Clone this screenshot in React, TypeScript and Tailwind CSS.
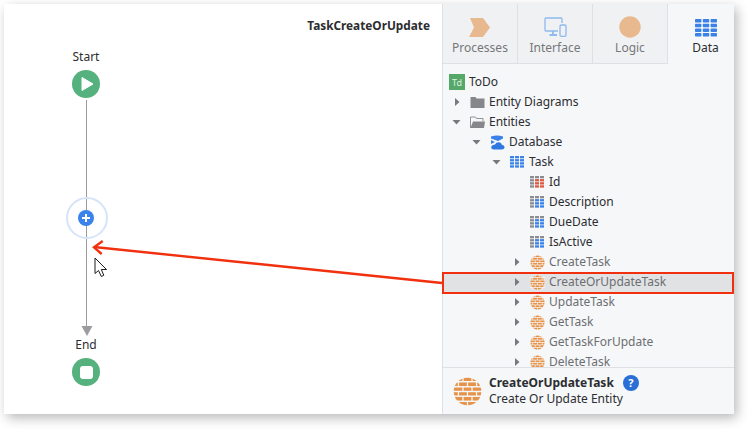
import React from "react";

const font = { fontFamily: '"Noto Sans", sans-serif' };

function Caret({ dir }: { dir: "right" | "down" }) {
  return (
    <svg width="10" height="10" viewBox="0 0 10 10" className="block">
      {dir === "right" ? <path d="M3 1 L7.5 5 L3 9 Z" fill="#77797d" /> : <path d="M0.5 3 L8.5 3 L4.5 7.5 Z" fill="#77797d" />}
    </svg>
  );
}

function Grid({ colors, size = 14 }: { colors: string[][]; size?: number }) {
  return (
    <svg width={size} height={size * 0.86} viewBox="0 0 14 12" className="block">
      {colors.map((row, r) =>
        row.map((c, i) => <rect key={`${r}-${i}`} x={i * 5} y={r * 3.1} width="4" height="2.3" fill={c} />)
      )}
    </svg>
  );
}

const B = "#3b82e8";
const G = "#8a8c90";
const R = "#dc5a40";
const blueGrid = [[B, B, B], [B, B, B], [B, B, B], [B, B, B]];
const attrGrid = [[G, G, G], [G, B, B], [G, B, B], [G, B, B]];
const idGrid = [[G, G, G], [G, R, R], [G, R, R], [G, R, R]];

function Globe({ size = 16 }: { size?: number }) {
  const o = "#e69248";
  const lines = [2.6, 5.4, 8, 10.6, 13.4];
  return (
    <svg width={size} height={size} viewBox="0 0 16 16" className="block">
      <circle cx="8" cy="8" r="7.6" fill={o} />
      {lines.map((y) => (
        <rect key={y} x="0" y={y - 0.4} width="16" height="0.8" fill="#f6f7f9" />
      ))}
      {[5.5, 10.5].map((x) => (
        <React.Fragment key={x}>
          <rect x={x - 0.35} y="0" width="0.7" height="2.4" fill="#f6f7f9" />
          <rect x={x - 0.35} y="5.4" width="0.7" height="2.6" fill="#f6f7f9" />
          <rect x={x - 0.35} y="10.6" width="0.7" height="2.8" fill="#f6f7f9" />
        </React.Fragment>
      ))}
      {[3, 8, 13].map((x) => (
        <React.Fragment key={x}>
          <rect x={x - 0.35} y="2.6" width="0.7" height="2.8" fill="#f6f7f9" />
          <rect x={x - 0.35} y="8" width="0.7" height="2.6" fill="#f6f7f9" />
          <rect x={x - 0.35} y="13.4" width="0.7" height="2.6" fill="#f6f7f9" />
        </React.Fragment>
      ))}
    </svg>
  );
}

function FolderClosed() {
  return (
    <svg width="15" height="13" viewBox="0 0 15 13" className="block">
      <path d="M0.5 1.5 Q0.5 1 1 1 L5.5 1 L6.5 2.5 L14.5 2.5 L14.5 12 L0.5 12 Z" fill="#85878b" />
    </svg>
  );
}

function FolderOpen() {
  return (
    <svg width="15" height="13" viewBox="0 0 15 13" className="block">
      <path d="M0.5 12 L0.5 1 L5.5 1 L6.5 2.5 L13 2.5 L13 5" fill="none" stroke="#85878b" strokeWidth="0.9" />
      <path d="M0.5 12 L3 5.5 L15 5.5 L14 12 Z" fill="#85878b" />
    </svg>
  );
}

function Database() {
  return (
    <svg width="15" height="15" viewBox="0 0 15 15" className="block">
      <path d="M1 1.5 Q7 -0.5 13 1.5 L13 3.5 L8 6 L1 3.5 Z" fill="#3b82e8" />
      <path d="M1 5 L5 7 L1 9 Z" fill="#3b82e8" />
      <path d="M4 14.5 Q0.5 14.5 1.5 11 Q3 9.5 5 9.5 Q6.5 6.5 10 7.5 Q12 8.5 12 10 Q14.8 10.5 14.5 12.7 Q14 14.5 12 14.5 Z" fill="#2f78e0" />
    </svg>
  );
}

function Row({
  level,
  caret,
  icon,
  label,
  muted,
  selected,
}: {
  level: number;
  caret?: "right" | "down";
  icon: React.ReactNode;
  label: string;
  muted?: boolean;
  selected?: boolean;
}) {
  return (
    <div
      className={`flex h-5 shrink-0 items-center text-[12px] leading-5 whitespace-nowrap ${
        selected ? "bg-[#e1e2e4]" : ""
      } ${muted ? "text-[#6c6e72]" : "text-[#2c2d30]"}`}
    >
      <div style={{ width: 6 + level * 20 }} className="flex shrink-0 justify-end">
        {caret && (
          <div className="mr-[7px]">
            <Caret dir={caret} />
          </div>
        )}
      </div>
      <div className="flex w-[16px] shrink-0 items-center justify-center">{icon}</div>
      <span className="ml-[4px]">{label}</span>
    </div>
  );
}

function Tab({ label, icon, active }: { label: string; icon: React.ReactNode; active?: boolean }) {
  return (
    <div
      className={`flex w-[75px] shrink-0 flex-col items-center border-[#dfe0e3] ${
        active ? "text-[#2c2d30]" : "border-r border-b bg-[#f0f1f3] text-[#75777b]"
      }`}
    >
      <div className="flex h-[33px] items-end justify-center pt-[9px]">{icon}</div>
      <div className="mt-[1px] text-[12px] leading-5">{label}</div>
    </div>
  );
}

export default function App() {
  return (
    <div className="h-[429px] w-[749px] overflow-hidden bg-white pt-[4px] pl-[4px]" style={font}>
      <div className="relative flex h-[410px] w-[730px] bg-white shadow-[3px_4px_11px_rgba(0,0,0,0.28)]">
        {/* Canvas */}
        <div className="relative h-full w-[439px] shrink-0 border-r border-[#dfe0e3] bg-white">
          <div className="absolute top-[11px] right-[12px] text-[11.8px] leading-5 font-bold text-[#2c2d30]">
            TaskCreateOrUpdate
          </div>

          <div className="absolute top-[43px] left-[62px] w-[40px] text-center text-[12px] leading-5 text-[#2c2d30]">Start</div>
          <div className="absolute top-[66px] left-[68px] flex h-[28px] w-[28px] items-center justify-center rounded-full bg-[#55b17e]">
            <svg width="16" height="16" viewBox="0 0 16 16" className="ml-[2px]">
              <path d="M3 1.5 L14 8 L3 14.5 Z" fill="white" stroke="white" strokeWidth="1" strokeLinejoin="round" />
            </svg>
          </div>

          <div className="absolute top-[96px] left-[82px] h-[228px] w-px bg-[#9a9c9f]" />
          <div className="absolute top-[193px] left-[61.5px] h-[42px] w-[42px] rounded-full border-2 border-[#d6e4fa]" />
          <div className="absolute top-[206px] left-[74px] flex h-[16px] w-[16px] items-center justify-center rounded-full bg-[#3a83ea]">
            <svg width="10" height="10" viewBox="0 0 10 10">
              <path d="M5 1 V9 M1 5 H9" stroke="white" strokeWidth="2" />
            </svg>
          </div>
          <svg width="12" height="10" viewBox="0 0 12 10" className="absolute top-[322px] left-[77px]">
            <path d="M0.5 0 L11.5 0 L6 10 Z" fill="#9a9c9f" />
          </svg>

          <div className="absolute top-[331px] left-[62px] w-[40px] text-center text-[12px] leading-5 text-[#2c2d30]">End</div>
          <div className="absolute top-[354px] left-[68px] flex h-[28px] w-[28px] items-center justify-center rounded-full bg-[#55b17e]">
            <div className="h-[13px] w-[13px] rounded-[3px] bg-white" />
          </div>
        </div>

        {/* Right panel */}
        <div className="flex h-full min-w-0 flex-1 flex-col overflow-hidden bg-[#f6f7f9]">
          <div className="flex h-[60px] shrink-0">
            <Tab
              label="Processes"
              icon={
                <svg width="22" height="19" viewBox="0 0 22 19">
                  <path d="M1 0 L14 0 L21 9.5 L14 19 L0 19 L5 9.5 Z" fill="#e8b98f" />
                </svg>
              }
            />
            <Tab
              label="Interface"
              icon={
                <svg width="23" height="20" viewBox="0 0 23 20" fill="none" stroke="#8fb9ef" strokeWidth="1.3">
                  <path d="M14 14 H2 Q1 14 1 13 V2 Q1 1 2 1 H17 Q18 1 18 2 V6" />
                  <path d="M9 14 V17 M5.5 18 H13" strokeWidth="1.8" />
                  <rect x="16" y="8" width="6" height="11.3" rx="1.2" />
                </svg>
              }
            />
            <Tab
              label="Logic"
              icon={
                <svg width="22" height="22" viewBox="0 0 22 22" className="-mb-[1px]">
                  <circle cx="11" cy="11" r="10.7" fill="#e8b98f" />
                </svg>
              }
            />
            <Tab
              active
              label="Data"
              icon={
                <svg width="22" height="18" viewBox="0 0 22 18">
                  {[0, 4.7, 9.4, 14].map((y) =>
                    [0, 7.8, 15.6].map((x) => <rect key={`${x}-${y}`} x={x} y={y} width="6.4" height="3.5" rx="0.7" fill="#3b82e8" />)
                  )}
                </svg>
              }
            />
          </div>

          <div className="flex min-h-0 flex-1 flex-col overflow-hidden pt-[8px]">
            <Row
              level={0}
              label="ToDo"
              icon={
                <div className="flex h-[16px] w-[16px] items-center justify-center bg-[#55a868] text-[9px] leading-none text-[#dff0e3]">Td</div>
              }
            />
            <Row level={1} caret="right" icon={<FolderClosed />} label="Entity Diagrams" />
            <Row level={1} caret="down" icon={<FolderOpen />} label="Entities" />
            <Row level={2} caret="down" icon={<Database />} label="Database" />
            <Row level={3} caret="down" icon={<Grid colors={blueGrid} />} label="Task" />
            <Row level={4} icon={<Grid colors={idGrid} />} label="Id" />
            <Row level={4} icon={<Grid colors={attrGrid} />} label="Description" />
            <Row level={4} icon={<Grid colors={attrGrid} />} label="DueDate" />
            <Row level={4} icon={<Grid colors={attrGrid} />} label="IsActive" />
            <Row level={4} caret="right" muted icon={<Globe size={15} />} label="CreateTask" />
            <Row level={4} caret="right" muted selected icon={<Globe size={15} />} label="CreateOrUpdateTask" />
            <Row level={4} caret="right" muted icon={<Globe size={15} />} label="UpdateTask" />
            <Row level={4} caret="right" muted icon={<Globe size={15} />} label="GetTask" />
            <Row level={4} caret="right" muted icon={<Globe size={15} />} label="GetTaskForUpdate" />
            <Row level={4} caret="right" muted icon={<Globe size={15} />} label="DeleteTask" />
          </div>

          <div className="flex h-[47px] shrink-0 items-center border-t border-[#dfe0e3] pl-[10px]">
            <Globe size={29} />
            <div className="ml-[7px] text-[12px] leading-4 text-[#2c2d30]">
              <div className="flex items-center font-bold">
                CreateOrUpdateTask
                <span className="ml-[9px] flex h-[16px] w-[16px] items-center justify-center rounded-full bg-[#2a6fd6] text-[11px] font-bold text-white">?</span>
              </div>
              <div>Create Or Update Entity</div>
            </div>
          </div>
        </div>

        {/* Annotation overlay */}
        <div className="pointer-events-none absolute top-[267.5px] left-[438px] h-[22.5px] w-[291.5px] border-2 border-[#f0300f]" />
        <svg width="450" height="120" viewBox="0 0 450 120" className="pointer-events-none absolute top-[220px] left-[0px]">
          <path d="M438 59 L90 23" stroke="#f0300f" strokeWidth="2.4" fill="none" />
          <path d="M98.7 17 L90 23.3 L97.7 30" stroke="#f0300f" strokeWidth="2.4" fill="none" />
        </svg>
        <svg width="14" height="21" viewBox="0 0 14 21" className="pointer-events-none absolute top-[253px] left-[90px]">
          <path d="M1 1 L1 16.5 L4.5 13.5 L7.3 19.5 L9.8 18.3 L7.3 12.5 L12.5 12.5 Z" fill="white" stroke="#1d1d1f" strokeWidth="1" strokeLinejoin="round" />
        </svg>
      </div>
    </div>
  );
}
